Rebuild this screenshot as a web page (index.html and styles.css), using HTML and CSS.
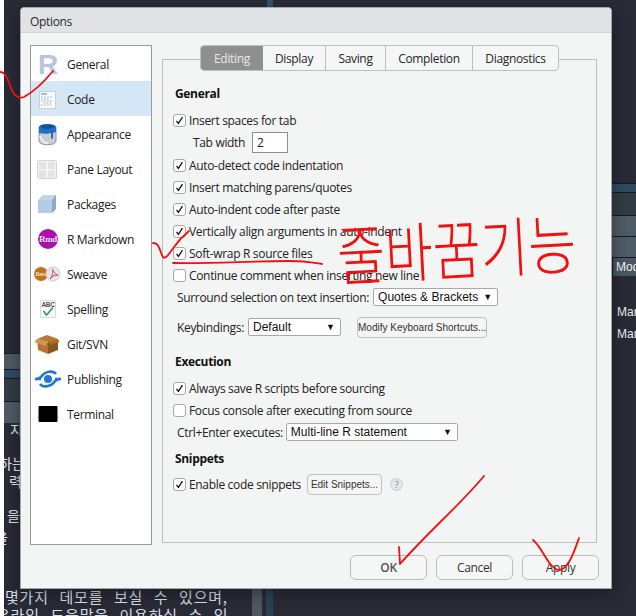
FILE: index.html
```html
<!DOCTYPE html>
<html lang="en">
<head>
<meta charset="utf-8">
<title>Options</title>
<link rel="stylesheet" href="styles.css">
</head>
<body>
<svg class="defs" width="0" height="0" aria-hidden="true">
  <symbol id="tick" viewBox="0 0 13 13"><path d="M3 7 L5.2 10 L10 2.6" fill="none" stroke="#111" stroke-width="1.5"/></symbol>
</svg>

<div class="desktop">
  <div class="white-edge"></div>
  <div class="top-blue"></div>
  <div class="left-bars">
    <div class="bar-gray"></div><div class="bar-blue"></div><div class="bar-slate"></div><div class="bar-gray bar-last"></div>
  </div>
  <div class="left-text">
    <p class="lt1">지</p><p class="lt2">하는</p><p class="lt3">력</p><p class="lt4">을</p><p class="lt5">을</p>
  </div>
  <div class="right-bars">
    <div class="bar-blue"></div><div class="bar-slate"></div><div class="bar-gray"></div><div class="bar-gray"></div>
    <div class="mod-tab">Mod</div>
    <p class="mar">Mar</p><p class="mar">Mar</p>
  </div>
  <div class="bottom-text">
    <p>몇가지 데모를 보실 수 있으며,</p>
    <p>온라인 도움말을 이용하실 수 있</p>
  </div>
  <div class="bottom-gray"></div>
  <div class="bottom-blue"></div>
</div>

<section class="dialog">
  <header class="titlebar">Options</header>
  <div class="dialog-main">
    <nav class="sidebar">
      <div class="nav-item">
        <svg class="nav-icon" viewBox="0 0 30 30"><text x="15" y="25" text-anchor="middle" class="icon-r">R</text></svg>
        <span>General</span>
      </div>
      <div class="nav-item nav-selected">
        <svg class="nav-icon" viewBox="0 0 30 30">
          <rect x="6.5" y="7.5" width="16" height="17" fill="#fbfbfb" stroke="#c9ced2"/>
          <path d="M8 10h6" stroke="#6aa5d8" stroke-width="1.4"/>
          <path d="M8 13h12M8 15h9M8 17h12M10 19h8M8 21h11" stroke="#b5b8ba" stroke-dasharray="2 1"/>
        </svg>
        <span>Code</span>
      </div>
      <div class="nav-item">
        <svg class="nav-icon" viewBox="0 0 30 30">
          <path d="M6 8 V22 C6 27 23 27 23 22 V8 Z" fill="#c9ccd0" stroke="#8e9398"/>
          <path d="M6 8 C6 4 23 4 23 8 V14 C23 12 20 13 20 15 V19 C20 20 18 20 18 19 V14 C15 15 10 15 6 14 Z" fill="#1f6fc4"/>
          <ellipse cx="14.5" cy="7.5" rx="7" ry="2" fill="#0f4f9e"/>
          <path d="M7 17 C10 24 12 24 15 24" stroke="#eef0f2" stroke-width="2" fill="none"/>
        </svg>
        <span>Appearance</span>
      </div>
      <div class="nav-item">
        <svg class="nav-icon" viewBox="0 0 30 30">
          <rect x="4.5" y="6.5" width="19" height="18" rx="1.5" fill="#f4f4f4" stroke="#d4d4d4"/>
          <rect x="6" y="8" width="7" height="7" fill="#e4e4e4"/><rect x="15" y="8" width="7" height="7" fill="#e4e4e4"/>
          <rect x="6" y="16.500" width="7" height="7" fill="#e4e4e4"/><rect x="15" y="16.500" width="7" height="7" fill="#e4e4e4"/>
        </svg>
        <span>Pane Layout</span>
      </div>
      <div class="nav-item">
        <svg class="nav-icon" viewBox="0 0 30 30">
          <path d="M5 11 L10 6 H23 V20 L19 24 H5 Z" fill="#c2d4ea"/>
          <path d="M5 11 H19 V24 H5 Z" fill="#b4cbe6"/>
          <path d="M19 11 L23 6 V20 L19 24 Z" fill="#8fa9c9"/>
        </svg>
        <span>Packages</span>
      </div>
      <div class="nav-item">
        <svg class="nav-icon" viewBox="0 0 30 30">
          <circle cx="15" cy="15" r="10" fill="#a912ab"/>
          <text x="15" y="18" text-anchor="middle" class="icon-rmd">Rmd</text>
        </svg>
        <span>R Markdown</span>
      </div>
      <div class="nav-item">
        <svg class="nav-icon nav-icon-wide" viewBox="0 0 30 30">
          <circle cx="8" cy="15" r="7" fill="#c46f14"/>
          <text x="8" y="17" text-anchor="middle" class="icon-rnw">Rnw</text>
          <circle cx="20" cy="15" r="7" fill="#e6e6e8" stroke="#cfcfd2"/>
          <path d="M17 20 C20 16 20 13 19.500 10.500 C21 13 22 16 25 16 C22 16 19 17 17 20Z" fill="none" stroke="#cc3a3a" stroke-width="0.9"/>
        </svg>
        <span>Sweave</span>
      </div>
      <div class="nav-item">
        <svg class="nav-icon" viewBox="0 0 30 30">
          <rect x="7.500" y="6.500" width="15" height="17" fill="#f8f8f8" stroke="#dcdcdc"/>
          <text x="15" y="13" text-anchor="middle" class="icon-abc">ABC</text>
          <path d="M10.500 17 L13.500 21 L20 13.500" fill="none" stroke="#2f9e56" stroke-width="1.600"/>
        </svg>
        <span>Spelling</span>
      </div>
      <div class="nav-item">
        <svg class="nav-icon" viewBox="0 0 30 30">
          <path d="M4 10 L14 6 L25 10 L15 13 Z" fill="#b8792f"/>
          <path d="M4 10 L15 13 V25 L5 21 Z" fill="#b57531"/>
          <path d="M15 13 L25 10 V21 L15 25 Z" fill="#8c5420"/>
          <path d="M4 10 L1.500 13 L12 17 L15 13 Z" fill="#cf9757"/>
          <path d="M25 10 L26.500 13 L18 16 L15 13 Z" fill="#a96d2c"/>
        </svg>
        <span>Git/SVN</span>
      </div>
      <div class="nav-item">
        <svg class="nav-icon" viewBox="0 0 30 30">
          <circle cx="15" cy="15" r="4" fill="#2077d4"/>
          <path d="M3 15 C5 15 6 15 8 13 C12 7 20 6 23 10" fill="none" stroke="#2077d4" stroke-width="2.600"/>
          <path d="M27 15 C25 15 24 15 22 17 C18 23 10 24 7 20" fill="none" stroke="#2077d4" stroke-width="2.600"/>
          <path d="M2 15 H8M22 15 H28" stroke="#2077d4" stroke-width="2.600"/>
        </svg>
        <span>Publishing</span>
      </div>
      <div class="nav-item">
        <svg class="nav-icon" viewBox="0 0 30 30"><rect x="5.500" y="7" width="19" height="16" rx="1" fill="#000"/></svg>
        <span>Terminal</span>
      </div>
    </nav>

    <div class="content">
      <div class="tabs">
        <div class="tab tab-active tab-editing">Editing</div>
        <div class="tab tab-display">Display</div>
        <div class="tab tab-saving">Saving</div>
        <div class="tab tab-completion">Completion</div>
        <div class="tab tab-diagnostics">Diagnostics</div>
      </div>
      <div class="panel">
        <h3 class="heading">General</h3>
        <div class="row row-first"><span class="box"><svg><use href="#tick"/></svg></span><span class="lbl">Insert spaces for tab</span></div>
        <div class="row row-indent"><span class="lbl">Tab width</span><span class="num-input">2</span></div>
        <div class="row row-after-input"><span class="box"><svg><use href="#tick"/></svg></span><span class="lbl">Auto-detect code indentation</span></div>
        <div class="row"><span class="box"><svg><use href="#tick"/></svg></span><span class="lbl">Insert matching parens/quotes</span></div>
        <div class="row"><span class="box"><svg><use href="#tick"/></svg></span><span class="lbl">Auto-indent code after paste</span></div>
        <div class="row"><span class="box"><svg><use href="#tick"/></svg></span><span class="lbl">Vertically align arguments in auto-indent</span></div>
        <div class="row"><span class="box"><svg><use href="#tick"/></svg></span><span class="lbl">Soft-wrap R source files</span></div>
        <div class="row"><span class="box"></span><span class="lbl">Continue comment when inserting new line</span></div>
        <div class="row row-label"><span class="lbl">Surround selection on text insertion:</span><span class="select sel-quotes">Quotes &amp; Brackets<i class="caret">▼</i></span></div>
        <div class="row row-label row-keys"><span class="lbl">Keybindings:</span><span class="select sel-keys">Default<i class="caret">▼</i></span><span class="small-btn btn-modify">Modify Keyboard Shortcuts...</span></div>
        <h3 class="heading heading-exec">Execution</h3>
        <div class="row row-first"><span class="box"><svg><use href="#tick"/></svg></span><span class="lbl">Always save R scripts before sourcing</span></div>
        <div class="row"><span class="box"></span><span class="lbl">Focus console after executing from source</span></div>
        <div class="row row-label"><span class="lbl">Ctrl+Enter executes:</span><span class="select sel-multi">Multi-line R statement<i class="caret">▼</i></span></div>
        <h3 class="heading heading-snip">Snippets</h3>
        <div class="row row-snip"><span class="box"><svg><use href="#tick"/></svg></span><span class="lbl">Enable code snippets</span><span class="small-btn btn-snippets">Edit Snippets...</span><span class="help">?</span></div>
      </div>
    </div>
  </div>
  <footer class="footer">
    <div class="dlg-btn btn-ok">OK</div>
    <div class="dlg-btn">Cancel</div>
    <div class="dlg-btn">Apply</div>
  </footer>
</section>

<div class="handwriting" lang="ko">줄바꿈기능</div>
<svg class="ink" viewBox="0 0 636 616" aria-hidden="true">
  <path d="M0 72 C6 72 8 80 11 88 C14 96 19 99 24 97 C33 92 44 82 53 71"/>
  <path d="M153 243 C160 243 160 253 163 257 C166 260 170 252 174 247 C179 240 184 235 189 231"/>
  <path d="M173 263 C210 264 250 261 290 261 C305 261 315 263 322 264"/>
  <path d="M484 476 C460 505 430 530 400 564 L399 547"/>
  <path d="M533 540 C543 548 548 568 559 570 C568 570 574 552 579 538"/>
</svg>
</body>
</html>
```

FILE: styles.css
```css
* { box-sizing: border-box; }
html, body { margin: 0; padding: 0; }
body {
  width: 636px;
  height: 616px;
  position: relative;
  overflow: hidden;
  background: #282a36;
  font-family: "Open Sans", "Noto Sans", sans-serif;
  font-size: 12px;
  color: #1c1c1c;
}
p { margin: 0; }
.defs { position: absolute; }

/* backdrop windows */
.desktop { position: absolute; inset: 0; }
.white-edge { position: absolute; left: 0; top: 0; bottom: 0; width: 4px; background: #fff; z-index: 2; }
.top-blue { position: absolute; left: 267px; top: 0; width: 6px; height: 8px; background: #34526b; }
.left-bars { position: absolute; left: 4px; top: 353px; width: 18px; }
.right-bars { position: absolute; left: 611px; top: 183px; width: 25px; display: flex; flex-direction: column; }
.bar-gray { height: 21px; background: #4e5b64; border-top: 1px solid #171a20; }
.bar-blue { height: 9px; background: #2e4a60; border-top: 1px solid #171a20; }
.bar-slate { height: 23px; background: #313c42; border-top: 1px solid #171a20; }
.left-bars .bar-gray { height: 16px; }
.left-bars .bar-last { height: 22px; }
.mod-tab {
  height: 19px;
  margin-left: 1px;
  background: #4a5660;
  border-top: 1px solid #171a20;
  border-left: 1px solid #171a20;
  color: #f2f4f6;
  font-family: "Liberation Sans", sans-serif;
  font-size: 12px;
  line-height: 18px;
  padding-left: 3px;
  overflow: hidden;
}
.mar {
  margin: 30px 0 0 6px;
  height: 12px;
  color: #e6edf2;
  font-family: "Liberation Sans", sans-serif;
  font-size: 12px;
  line-height: 12px;
}
.mar + .mar { margin-top: 10px; }
.left-text {
  position: absolute;
  left: 0;
  top: 420px;
  width: 24px;
  height: 130px;
  color: #e3e8ec;
  font-family: "Noto Sans CJK KR", sans-serif;
  font-size: 14px;
  line-height: 20px;
}
.left-text p { position: absolute; white-space: nowrap; }
.lt1 { left: 10px; top: -1px; }
.lt2 { left: -1px; top: 33px; }
.lt3 { left: 9px; top: 51px; }
.lt4 { left: 7px; top: 85px; }
.lt5 { left: -5px; top: 107px; }
.bottom-text {
  position: absolute;
  left: 5px;
  top: 588px;
  color: #d9dee2;
  font-family: "Noto Sans CJK KR", sans-serif;
  font-size: 15px;
  letter-spacing: 0.8px;
  word-spacing: 6.5px;
  line-height: 18px;
  white-space: nowrap;
}
.bottom-text p + p { margin-left: -9px; }
.bottom-gray { position: absolute; left: 252px; top: 588px; width: 10px; height: 28px; background: #4c575f; }
.bottom-blue { position: absolute; left: 266px; top: 588px; width: 7px; height: 28px; background: #2b4055; }

/* dialog */
.dialog {
  position: absolute;
  left: 20px;
  top: 7px;
  width: 592px;
  height: 582px;
  background: #f3f4f4;
  border: 1px solid #a5a7a9;
  border-radius: 4px 4px 0 0;
  box-shadow: 0 4px 14px rgba(10, 10, 15, 0.45);
  display: flex;
  flex-direction: column;
  letter-spacing: -0.33px;
  z-index: 3;
}
.titlebar {
  height: 25px;
  flex: none;
  background: #e1e2e5;
  border-bottom: 1px solid #d2d3d6;
  border-radius: 3px 3px 0 0;
  padding: 1px 0 0 9px;
  line-height: 25px;
  font-size: 12px;
  color: #2a2a2a;
}
.dialog-main { display: flex; gap: 10px; padding: 12px 0 0 9px; height: 512px; flex: none; }

.sidebar {
  width: 122px;
  height: 500px;
  flex: none;
  background: #fff;
  border: 1px solid #9b9b9b;
}
.nav-item { display: flex; align-items: center; height: 35px; padding-left: 2px; gap: 4px; font-size: 12px; color: #222; }
.nav-item span { padding-top: 2px; }
.nav-selected { background: #d5e6f5; }
.nav-icon { width: 30px; height: 30px; flex: none; }
.icon-r { font: 700 28px "Liberation Sans", sans-serif; fill: #b9c4dd; }
.icon-rmd { font: 700 9px "Liberation Serif", serif; fill: #f3dff3; }
.icon-rnw { font: 700 6px "Liberation Serif", serif; fill: #f3e0c8; }
.icon-abc { font: 700 6.500px "Liberation Sans", sans-serif; fill: #555; }

.content { width: 435px; flex: none; position: relative; display: flex; flex-direction: column; align-items: flex-start; }
.tabs {
  display: flex;
  height: 26px;
  margin-left: 38px;
  margin-bottom: -12px;
  position: relative;
  z-index: 1;
  background: #f5f6f6;
  border: 1px solid #bfbfbf;
  border-radius: 4px;
}
.tab { display: flex; align-items: center; justify-content: center; font-size: 12px; color: #262626; border-right: 1px solid #bfbfbf; }
.tab-editing { width: 62px; }
.tab-display { width: 63px; }
.tab-saving { width: 60px; }
.tab-completion { width: 87px; }
.tab-diagnostics { width: 85px; border-right: 0; }
.tab-active { background: #8f8f8f; color: #e9e9e9; border-radius: 3px 0 0 3px; border-right: 0; }
.panel {
  width: 435px;
  height: 484px;
  border: 1px solid #bfbfbf;
  padding: 22px 0 0 10px;
}
.heading { margin: 0 0 0 2px; height: 22px; line-height: 24px; font-size: 12px; font-weight: 700; color: #111; }
.heading-exec { margin-top: 12px; }
.heading-snip { margin-top: 4px; }
.row { display: flex; align-items: center; height: 22px; white-space: nowrap; font-size: 12px; color: #222; }
.row-first { margin-top: 5px; }
.row-after-input { margin-top: 1px; }
.row-indent { padding-left: 20px; }
.row-label { padding-left: 4px; }
.row-keys { margin-top: 8px; }
.row-snip { margin-top: 4px; }
.box {
  width: 13px;
  height: 13px;
  flex: none;
  margin-right: 3px;
  background: #fdfdfd;
  border: 1px solid #a8a8a8;
  border-radius: 3px;
  display: block;
}
.box svg { display: block; width: 11px; height: 11px; }
.num-input {
  width: 36px;
  height: 21px;
  margin-left: 7px;
  background: #fff;
  border: 1px solid #8e8e8e;
  padding-left: 4px;
  line-height: 19px;
  font-size: 12px;
}
.select {
  position: relative;
  flex: none;
  height: 18px;
  margin-left: 4px;
  background: #fff;
  border: 1px solid #a9a9a9;
  border-radius: 2px;
  padding-left: 4px;
  font-family: "Liberation Sans", sans-serif;
  font-size: 12px;
  letter-spacing: 0;
  line-height: 16px;
  color: #111;
}
.caret { position: absolute; right: 5px; top: 0; font-style: normal; font-size: 9px; line-height: 16px; color: #111; }
.sel-quotes { width: 125px; }
.sel-keys { width: 93px; }
.sel-multi { width: 172px; margin-left: 3px; }
.small-btn {
  flex: none;
  height: 21px;
  background: #f5f5f6;
  border: 1px solid #c0c0c0;
  border-radius: 4px;
  font-family: "Liberation Sans", sans-serif;
  font-size: 10px;
  letter-spacing: 0;
  line-height: 19px;
  text-align: center;
  color: #333;
}
.btn-modify { width: 130px; margin-left: 16px; }
.btn-snippets { width: 75px; margin-left: 6px; }
.help {
  flex: none;
  width: 13px;
  height: 13px;
  margin-left: 8px;
  border-radius: 50%;
  background: #e3e8ec;
  border: 1px solid #c5ccd2;
  font-size: 9px;
  line-height: 11px;
  text-align: center;
  color: #7c8791;
}

.footer { display: flex; justify-content: flex-end; gap: 9px; padding: 10px 12px 0 0; }
.dlg-btn {
  width: 77px;
  height: 25px;
  background: #f5f6f6;
  border: 1px solid #bdbdbd;
  border-radius: 6px;
  text-align: center;
  line-height: 24px;
  font-size: 12px;
  color: #333;
}
.btn-ok { color: #555; font-weight: 600; }

/* red pen notes over the window */
.handwriting {
  position: absolute;
  left: 337px;
  top: 218px;
  z-index: 4;
  color: #f01010;
  font-family: "Noto Sans CJK KR", sans-serif;
  font-size: 52px;
  font-weight: 300;
  line-height: 70px;
  white-space: nowrap;
  transform: rotate(-3deg) scaleY(1.25);
  transform-origin: left center;
}
.ink {
  position: absolute;
  left: 0;
  top: 0;
  width: 636px;
  height: 616px;
  z-index: 5;
  pointer-events: none;
}
.ink path { fill: none; stroke: #f01010; stroke-width: 1.8; stroke-linecap: round; stroke-linejoin: round; }
```
